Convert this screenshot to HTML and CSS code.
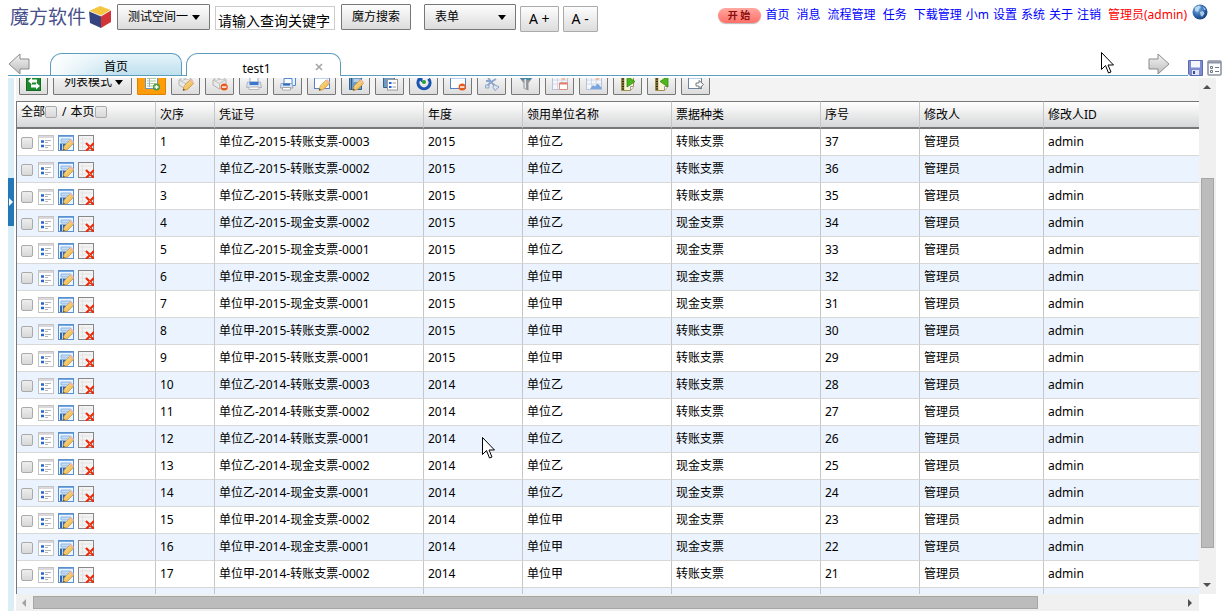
FILE: index.html
```html
<!DOCTYPE html>
<html lang="zh-CN">
<head>
<meta charset="UTF-8">
<meta name="viewport" content="width=device-width, initial-scale=1.0">
<title>魔方软件</title>
<link rel="stylesheet" href="styles.css">
</head>
<body>

<svg class="sprite" aria-hidden="true">
    <defs>
        <linearGradient id="arrowFill" x1="0" y1="0" x2="0" y2="1">
            <stop offset="0" stop-color="#f4f4f4"/><stop offset="1" stop-color="#bdbdbd"/>
        </linearGradient>
        <radialGradient id="globeFill" cx="0.35" cy="0.3" r="0.8">
            <stop offset="0" stop-color="#7fb4e4"/><stop offset="0.6" stop-color="#2a62a6"/><stop offset="1" stop-color="#123a70"/>
        </radialGradient>
        <linearGradient id="pencilFill" x1="0" y1="0" x2="1" y2="1">
            <stop offset="0" stop-color="#ffeeb0"/><stop offset="1" stop-color="#e8a428"/>
        </linearGradient>
    </defs>
    <symbol id="pencil" viewBox="0 0 16 16">
        <path d="M5 15.500l1.200-4.500L12 5l3.500 3.500-6 6z" fill="url(#pencilFill)" stroke="#c98f30" stroke-width=".7"/>
        <path d="M11.500 5.500L13 4l3 3-1.300 1.500z" fill="#f3b79c"/>
        <path d="M5 15.500l.5-2 1.500 1.500z" fill="#444"/>
    </symbol>
    <symbol id="minus" viewBox="0 0 16 16">
        <circle cx="12.200" cy="12" r="3.600" fill="#e85a1a"/>
        <path d="M10 12h4.400" stroke="#fff" stroke-width="1.500"/>
    </symbol>
    <symbol id="i-swap" viewBox="0 0 16 16">
        <rect x=".5" y=".5" width="14" height="15" fill="#1b8a2c" stroke="#136a20"/>
        <path d="M2 6l4-3.500v2h5v3H6v2z" fill="#fff"/>
        <path d="M14 11l-4-3.500v2H5v3h5v2z" fill="#fff"/>
    </symbol>
    <symbol id="i-add" viewBox="0 0 16 16">
        <rect x="1.500" y="0" width="12" height="13.500" fill="#fff" stroke="#6c93c4"/>
        <path d="M3 3.500h9M3 6h9M3 8.500h9M3 11h7" stroke="#a9cc90"/>
        <path d="M5.500 2v10" stroke="#8fb4dc"/>
        <circle cx="12.500" cy="12" r="3.500" fill="#4c9a3a"/>
        <path d="M10.500 12h4M12.500 10v4" stroke="#fff" stroke-width="1.400"/>
    </symbol>
    <symbol id="i-blocks" viewBox="0 0 16 16">
        <path d="M1 5l3-2 3 1.500L10 2.500l4 2v5L7.500 14 1 10z" fill="#e9e9e9" stroke="#a5a5a5" stroke-width=".8"/>
        <path d="M1 5l6.500 3.500L14 4.500M7.500 8.500V14" fill="none" stroke="#b5b5b5" stroke-width=".8"/>
        <ellipse cx="4.500" cy="4" rx="2" ry="1.200" fill="#fff" stroke="#aaa" stroke-width=".6"/>
        <ellipse cx="10" cy="3.500" rx="2" ry="1.200" fill="#fff" stroke="#aaa" stroke-width=".6"/>
    </symbol>
    <symbol id="i-print" viewBox="0 0 16 16">
        <path d="M4 1h8v6H4z" fill="#fff" stroke="#9ab"/>
        <path d="M1.500 7h13l1 5.500H.5z" fill="#dde3ee" stroke="#a2a9b8" stroke-width=".8"/>
        <path d="M3.500 8.500h9" stroke="#3978d0" stroke-width="3"/>
        <path d="M3 12h10v2.500H3z" fill="#fafafa" stroke="#aaa" stroke-width=".8"/>
    </symbol>
    <symbol id="i-prints" viewBox="0 0 16 16">
        <path d="M7 .5h8.500v10H13" fill="#e8f1ff" stroke="#4e8ad8"/>
        <path d="M4 3.500h8v6H4z" fill="#fff" stroke="#4e8ad8"/>
        <path d="M1 8.500h11l1 4.500H.5z" fill="#dbe4f2" stroke="#8796b0" stroke-width=".8"/>
        <path d="M3 9.500h7" stroke="#2f6fc4" stroke-width="2.200"/>
        <path d="M2.500 12.500h8V15h-8z" fill="#fff" stroke="#999" stroke-width=".8"/>
    </symbol>
    <symbol id="i-window" viewBox="0 0 16 16">
        <rect x=".5" y="1.500" width="15" height="12" fill="#fff" stroke="#5583c4"/>
        <path d="M1 2.500h14" stroke="#78a5de" stroke-width="2"/>
    </symbol>
    <symbol id="i-book" viewBox="0 0 16 16">
        <path d="M1.500 1.500h12v13h-12z" fill="#6d9cc8" stroke="#35628f"/>
        <path d="M3.500 1.500v13" stroke="#2d577f"/>
        <path d="M5.500 4h6v3h-6z" fill="#b4d0ea"/>
    </symbol>
    <symbol id="i-form" viewBox="0 0 16 16">
        <path d="M1.500 1.500h11v11h-11z" fill="#6d9cc8" stroke="#35628f"/>
        <rect x="5.500" y="4.500" width="10" height="10.500" fill="#fff" stroke="#999"/>
        <path d="M7 8h2.500M7 12h2.500" stroke="#1f63d0" stroke-width="2"/>
        <path d="M10.500 8H14M10.500 12H14" stroke="#999"/>
    </symbol>
    <symbol id="i-refresh" viewBox="0 0 16 16">
        <path d="M3.500 3.800A6 6 0 1 0 12.500 3.800" fill="none" stroke="#1d55b4" stroke-width="3.200"/>
        <path d="M0 1.500h6.500V8z" fill="#1d55b4"/>
        <circle cx="8" cy="7" r="2" fill="#23a03a"/>
    </symbol>
    <symbol id="i-flow" viewBox="0 0 16 16">
        <path d="M3 1l4 6 5-3M7 7l-4 4M7 7l5 5M2 6h5" fill="none" stroke="#8aa6cf" stroke-width="1.800"/>
        <path d="M10 9.500l5 2.500-4 3.500-2-3z" fill="#d9e7f7" stroke="#8aa0c4"/>
        <path d="M1.500 10h3.500v3H1.500z" fill="#cfdff2" stroke="#8aa0c4" stroke-width=".8"/>
    </symbol>
    <symbol id="i-funnel" viewBox="0 0 16 16">
        <path d="M0 1h16L10.500 8v7.500l-5-2V8z" fill="#909499"/>
        <path d="M1 1.500h14L12 5H4z" fill="#4a88a8"/>
        <path d="M7.300 4v9.500" stroke="#e4e8ea" stroke-width="1.600"/>
    </symbol>
    <symbol id="i-chart" viewBox="0 0 16 16">
        <rect x=".5" y=".5" width="15" height="14" fill="#f6f7fb" stroke="#b8c2d8"/>
        <path d="M1 5h14M1 9h14M5.500 1v13M10 1v13" stroke="#d0d8e6"/>
        <circle cx="11.500" cy="3.500" r="1.800" fill="#f6b898"/>
    </symbol>
    <symbol id="i-notebook" viewBox="0 0 16 16">
        <path d="M1.500 .5h12v11l-3 4h-9z" fill="#f8f4d8" stroke="#a3904c"/>
        <path d="M3 1v14" stroke="#8a7436" stroke-width="2.500"/>
        <path d="M3 1v14" stroke="#2c2818" stroke-width="2" stroke-dasharray="1 1.500"/>
        <path d="M10.500 15v-3.500h3" fill="#fff" stroke="#999"/>
    </symbol>
    <symbol id="i-export" viewBox="0 0 16 16">
        <rect x=".5" y="1.500" width="13" height="12" fill="#fff" stroke="#6d83a0"/>
        <path d="M1 2.500h12" stroke="#7ca4d6" stroke-width="2"/>
        <path d="M8 8h3V5.500l4.500 4-4.500 4V11H8z" fill="#fff" stroke="#777"/>
    </symbol>
    <symbol id="i-list" viewBox="0 0 16 16">
        <rect x=".5" y=".5" width="15" height="15" fill="#fff" stroke="#c4c4c4"/>
        <path d="M1 2h14" stroke="#dad8dc" stroke-width="2"/>
        <path d="M3 6.500h3M3 11h3" stroke="#2467cf" stroke-width="2.500"/>
        <path d="M7 5.500h6M7 7.500h3M7 10.500h6M7 12.500h3" stroke="#b4b4b4"/>
    </symbol>
    <symbol id="i-edit" viewBox="0 0 16 16">
        <rect x=".5" y=".5" width="15" height="15" fill="#edf5fd" stroke="#5a8fd0"/>
        <path d="M1 1.500h14" stroke="#78a8e2"/>
        <path d="M3 4h10v3H3z" fill="#c5dcf5" stroke="#8db8e8"/>
        <path d="M2 8.500h6V15H2z" fill="#2e67b0"/>
        <path d="M4.500 9v6" stroke="#b9d2f0"/>
        <use href="#pencil"/>
    </symbol>
    <symbol id="i-delete" viewBox="0 0 16 16">
        <rect x=".5" y=".5" width="15" height="15" fill="#f3f3f3" stroke="#888"/>
        <path d="M2 4h12M2 8h6M2 12h6M4.500 2v12" stroke="#e2e2e2"/>
        <path d="M8 8l8 8M16 8l-8 8" stroke="#ee2a0c" stroke-width="2.200"/>
        <path d="M11 11l2 2" stroke="#ff8a4c"/>
    </symbol>
</svg>

<header class="topbar">
    <div class="logo">
        <span>魔方软件</span>
        <svg width="24" height="22" viewBox="0 0 24 22">
            <path d="M1 5L12 0l11 4-10 6z" fill="#f5c640"/>
            <path d="M1 5l12 5v12L2 17z" fill="#35437f"/>
            <path d="M23 4v12l-10 6V10z" fill="#d23438"/>
            <path d="M1 5l12 5M13 10l10-6" fill="none" stroke="#fff" stroke-width=".8"/>
        </svg>
    </div>
    <select class="btn space-select" aria-label="空间"><option>测试空间一</option></select>
    <input class="search" type="text" value="请输入查询关键字" aria-label="查询关键字">
    <button class="btn search-btn" type="button">魔方搜索</button>
    <select class="btn type-select" aria-label="类型"><option>表单</option></select>
    <button class="btn zoom-btn" type="button">A +</button>
    <button class="btn zoom-btn" type="button">A -</button>
    <nav class="links">
        <button class="start" type="button">开 始</button>
        <div class="main-links">
            <a href="#">首页</a>
            <a href="#">消息</a>
            <a href="#">流程管理</a>
            <a href="#">任务</a>
            <a href="#">下载管理</a>
        </div>
        <div class="sub-links">
            <a href="#">小m</a>
            <a href="#">设置</a>
            <a href="#">系统</a>
            <a href="#">关于</a>
            <a href="#">注销</a>
        </div>
        <a class="user" href="#">管理员(admin)</a>
        <svg class="globe" width="16" height="16" viewBox="0 0 16 16">
            <circle cx="8" cy="8" r="7.500" fill="url(#globeFill)"/>
            <path d="M3 3.500l4-2 2 1.500-2 2-1 3-3-1zM8 8l3-1 1.500 2.500L10 13 8.500 11zM11 2.500l3 3-2 .5z" fill="#c9e2f5" opacity=".8"/>
        </svg>
    </nav>
</header>

<div class="tabbar">
    <div class="tabs">
        <button class="icon-btn prev" type="button" aria-label="上一个">
            <svg width="22" height="22" viewBox="0 0 22 22"><path d="M1 11L12 1v5h9v10h-9v5z" fill="url(#arrowFill)" stroke="#8b8b8b"/></svg>
        </button>
        <a class="tab" href="#">首页</a>
        <a class="tab active" href="#">test1</a>
        <button class="icon-btn close" type="button" aria-label="关闭">
            <svg width="8" height="8" viewBox="0 0 8 8"><path d="M1 1l6 6M7 1L1 7" stroke="#a5a5a5" stroke-width="1.600"/></svg>
        </button>
        <button class="icon-btn next" type="button" aria-label="下一个">
            <svg width="22" height="22" viewBox="0 0 22 22"><path d="M21 11L10 1v5H1v10h9v5z" fill="url(#arrowFill)" stroke="#8b8b8b"/></svg>
        </button>
    </div>
    <button class="icon-btn" type="button" aria-label="保存">
        <svg width="15" height="16" viewBox="0 0 15 16">
            <path d="M.5 .5h14v15H2l-1.500-1.500z" fill="#7d8dd0" stroke="#5c69b4"/>
            <path d="M3 1h9v6.500H3z" fill="#f5f7ff"/><path d="M4 10h7v5H4z" fill="#dfe3f2"/><path d="M5 11h2v3H5z" fill="#3d4c9a"/>
        </svg>
    </button>
    <button class="icon-btn" type="button" aria-label="列表">
        <svg width="15" height="16" viewBox="0 0 15 16">
            <rect x="1" y="1" width="13" height="14" rx="1" fill="#fff" stroke="#8b95a3" stroke-width="1.600"/>
            <path d="M1 2.500h13" stroke="#8b95a3" stroke-width="2"/>
            <path d="M3.500 6.500h2v2h-2zM3.500 10.500h2v2h-2z" fill="none" stroke="#6c7684"/><path d="M8 7.500h4M8 11.500h4" stroke="#6c7684"/>
        </svg>
    </button>
</div>

<main class="workspace">
    <aside class="splitter">
        <button class="expand" type="button" aria-label="展开">
            <svg width="4" height="8" viewBox="0 0 4 8"><path d="M0 0l4 4-4 4z" fill="#fff"/></svg>
        </button>
    </aside>
    <div class="panel">
        <div class="toolbar">
            <button class="tool" type="button" aria-label="切换"><svg><use href="#i-swap"/></svg></button>
            <select class="tool mode" aria-label="显示模式"><option>列表模式</option></select>
            <button class="tool on" type="button" aria-label="新增"><svg><use href="#i-add"/></svg></button>
            <button class="tool" type="button" aria-label="批量修改"><svg><use href="#i-blocks"/><use href="#pencil"/></svg></button>
            <button class="tool" type="button" aria-label="批量删除"><svg><use href="#i-blocks"/><use href="#minus"/></svg></button>
            <button class="tool" type="button" aria-label="打印"><svg><use href="#i-print"/></svg></button>
            <button class="tool" type="button" aria-label="批量打印"><svg><use href="#i-prints"/></svg></button>
            <button class="tool" type="button" aria-label="修改"><svg><use href="#i-window"/><use href="#pencil"/></svg></button>
            <button class="tool" type="button" aria-label="编辑"><svg><use href="#i-book"/><use href="#pencil"/></svg></button>
            <button class="tool" type="button" aria-label="表单"><svg><use href="#i-form"/></svg></button>
            <button class="tool" type="button" aria-label="刷新"><svg><use href="#i-refresh"/></svg></button>
            <button class="tool" type="button" aria-label="删除"><svg><use href="#i-window"/><use href="#minus"/></svg></button>
            <button class="tool" type="button" aria-label="流程"><svg><use href="#i-flow"/></svg></button>
            <button class="tool" type="button" aria-label="过滤"><svg><use href="#i-funnel"/></svg></button>
            <button class="tool" type="button" aria-label="报表"><svg><use href="#i-chart"/><path d="M7.500 8h8v6.500h-8z" fill="#fff" stroke="#dd9080"/><path d="M7.500 8.500h8" stroke="#e0806c" stroke-width="2"/></svg></button>
            <button class="tool" type="button" aria-label="图表"><svg><use href="#i-chart"/><path d="M4 14l3-4 2 1.500 2.500-3 4 4V14z" fill="#7ba5de"/></svg></button>
            <button class="tool" type="button" aria-label="导入"><svg><use href="#i-notebook"/><path d="M7 1l8 5.500L7 12z" fill="#4cb81e" stroke="#2c7d10" stroke-width=".7"/></svg></button>
            <button class="tool" type="button" aria-label="导出"><svg><use href="#i-notebook"/><path d="M14 1L6 6.500l8 5.500z" fill="#4cb81e" stroke="#2c7d10" stroke-width=".7"/></svg></button>
            <button class="tool" type="button" aria-label="转出"><svg><use href="#i-export"/></svg></button>
        </div>
        <div class="grid-wrap">
            <table class="grid">
                <colgroup>
                    <col class="c-ops"><col class="c-no"><col class="c-code"><col class="c-year"><col class="c-unit"><col class="c-kind"><col class="c-seq"><col class="c-user"><col>
                </colgroup>
                <thead>
                    <tr>
                        <th class="pick"><label>全部<input type="checkbox"></label><span class="slash">/</span><label>本页<input type="checkbox"></label></th>
                        <th>次序</th>
                        <th>凭证号</th>
                        <th>年度</th>
                        <th>领用单位名称</th>
                        <th>票据种类</th>
                        <th>序号</th>
                        <th>修改人</th>
                        <th>修改人ID</th>
                    </tr>
                </thead>
                <tbody id="rows"></tbody>
            </table>
        </div>
        <div class="hscroll">
            <span class="arrow left"></span>
            <span class="thumb"></span>
            <span class="rest"></span>
            <span class="arrow right"></span>
        </div>
    </div>
    <div class="vscroll">
        <span class="arrow up"></span>
        <span class="before"></span>
        <span class="thumb"></span>
        <span class="rest"></span>
        <span class="arrow down"></span>
    </div>
</main>

<svg class="cursor cursor-top" width="13" height="22" viewBox="0 0 13 22"><path d="M.5 .5v17l4-4 3 7.500 2.500-1-3-7h5.500z" fill="#fff" stroke="#000"/></svg>
<svg class="cursor cursor-grid" width="13" height="22" viewBox="0 0 13 22"><path d="M.5 .5v17l4-4 3 7.500 2.500-1-3-7h5.500z" fill="#fff" stroke="#000"/></svg>

<script>
    // unit, year, kind, number
    const records = [
        ['单位乙', 2015, '转账支票', '0003'],
        ['单位乙', 2015, '转账支票', '0002'],
        ['单位乙', 2015, '转账支票', '0001'],
        ['单位乙', 2015, '现金支票', '0002'],
        ['单位乙', 2015, '现金支票', '0001'],
        ['单位甲', 2015, '现金支票', '0002'],
        ['单位甲', 2015, '现金支票', '0001'],
        ['单位甲', 2015, '转账支票', '0002'],
        ['单位甲', 2015, '转账支票', '0001'],
        ['单位乙', 2014, '转账支票', '0003'],
        ['单位乙', 2014, '转账支票', '0002'],
        ['单位乙', 2014, '转账支票', '0001'],
        ['单位乙', 2014, '现金支票', '0002'],
        ['单位乙', 2014, '现金支票', '0001'],
        ['单位甲', 2014, '现金支票', '0002'],
        ['单位甲', 2014, '现金支票', '0001'],
        ['单位甲', 2014, '转账支票', '0002']
    ];
    const rows = document.getElementById('rows');

    function rowHtml(r, i) {
        const cells = [i + 1, `${r[0]}-${r[1]}-${r[2]}-${r[3]}`, r[1], r[0], r[2], 37 - i, '管理员', 'admin'];
        return `<tr>
            <td><div class="ops">
                <input type="checkbox" aria-label="选择第${i + 1}行">
                <button class="icon-btn" type="button" aria-label="查看"><svg width="16" height="16"><use href="#i-list"/></svg></button>
                <button class="icon-btn" type="button" aria-label="修改"><svg width="16" height="16"><use href="#i-edit"/></svg></button>
                <button class="icon-btn" type="button" aria-label="删除"><svg width="16" height="16"><use href="#i-delete"/></svg></button>
            </div></td>
            ${cells.map(c => `<td>${c}</td>`).join('')}
        </tr>`;
    }

    // the last, empty row runs under the scrollbar
    rows.innerHTML = records.map(rowHtml).join('') + '<tr>' + '<td></td>'.repeat(9) + '</tr>';
</script>

</body>
</html>
```
FILE: styles.css
```css
* {
    box-sizing: border-box;
}
body {
    display: flex;
    flex-direction: column;
    height: 100vh;
    margin: 0;
    padding-bottom: 5px;
    overflow: hidden;
    background: #fff;
    color: #000;
    font: 12px/16px "Noto Sans", "Noto Sans CJK SC", sans-serif;
}
button, input, select {
    margin: 0;
    font: inherit;
    color: inherit;
}
svg {
    display: block;
}
.sprite {
    position: absolute;
    width: 0;
    height: 0;
}
.icon-btn {
    padding: 0;
    border: 0;
    background: none;
}

/* top bar */
.topbar {
    display: flex;
    align-items: flex-start;
    flex: none;
    height: 52px;
    padding: 4px 16px 0 10px;
}
.logo {
    display: flex;
    align-items: center;
    gap: 3px;
    margin-right: 5px;
    height: 26px;
    color: #47508a;
    font-size: 19px;
    white-space: nowrap;
}
.logo span {
    width: 75px;
}
.btn {
    height: 26px;
    padding: 0 10px;
    border: 1px solid #777;
    border-radius: 1px;
    background: linear-gradient(#fdfdfd, #dcdcdc);
}
select {
    appearance: none;
}
select.btn {
    background: url("data:image/svg+xml,%3Csvg xmlns='http://www.w3.org/2000/svg' width='8' height='5'%3E%3Cpath d='M0 0h8L4 5z'/%3E%3C/svg%3E") no-repeat right 9px center, linear-gradient(#fdfdfd, #dcdcdc);
}
.space-select {
    width: 93px;
}
.search {
    width: 120px;
    height: 24px;
    margin: 2px 6px 0 5px;
    padding: 3px 2px 0;
    border: 1px solid #ccc;
    font-size: 14px;
}
.search-btn {
    width: 70px;
    margin-right: 13px;
    padding: 0;
}
.type-select {
    width: 92px;
}
.zoom-btn {
    margin: 2px 0 0 4px;
    padding: 0 8px;
    border-color: #aaa;
    font-size: 14px;
    white-space: nowrap;
}
.links {
    display: flex;
    align-items: center;
    height: 22px;
    margin-left: auto;
    white-space: nowrap;
}
.links a {
    color: #00f;
    text-decoration: none;
}
.main-links {
    display: flex;
    gap: 7px;
    margin: 0 4px 0 5px;
}
.sub-links {
    display: flex;
    gap: 4px;
    margin-right: 7px;
}
.links .user {
    color: #f00;
}
.globe {
    margin: 0 0 6px 5px;
}
.start {
    width: 43px;
    height: 15px;
    padding: 0;
    border: 0;
    border-radius: 8px;
    background: linear-gradient(#ffa8a0, #ff7068);
    box-shadow: 0 1px 1px #bbb;
    color: #8a1010;
    font-size: 10px;
    font-weight: bold;
    line-height: 15px;
}

/* tabs */
.tabbar {
    display: flex;
    flex: none;
    align-items: flex-end;
    gap: 4px;
    height: 24px;
    margin-bottom: 2px;
    padding: 0 2px 0 8px;
}
.tabs {
    display: flex;
    flex: 1;
    height: 24px;
    margin-right: -4px;
    border-bottom: 1px solid #5c9dbd;
}
.tab {
    height: 22px;
    margin-top: 1px;
    padding-top: 5px;
    border: 1px solid #5c9dbd;
    border-bottom: 0;
    border-radius: 12px 10px 0 0;
    background: linear-gradient(100deg, #fff, transparent 50%), linear-gradient(#e6f4fa, #bfe0ee);
    color: #000;
    text-align: center;
    text-decoration: none;
}
.prev {
    margin-right: 20px;
}
.prev + .tab {
    width: 132px;
}
.tab.active {
    width: 155px;
    height: 23px;
    margin-left: 4px;
    padding-top: 7px;
    padding-right: 14px;
    background: #fff;
}
.close {
    align-self: flex-start;
    margin: 11px 0 0 -26px;
}
.next {
    margin: 0 18px 0 auto;
}

/* work area */
.workspace {
    display: flex;
    flex: 1;
    min-height: 0;
    padding: 0 8px;
}
.splitter {
    flex: none;
    width: 6px;
    margin-right: 2px;
    padding-top: 100px;
    background: #dceef5;
}
.expand {
    display: flex;
    align-items: center;
    width: 6px;
    height: 48px;
    padding: 0 0 0 1px;
    border: 0;
    background: #2478b8;
}
.panel {
    display: flex;
    flex: 1;
    flex-direction: column;
    min-width: 0;
}
.toolbar {
    display: flex;
    flex: none;
    align-items: flex-end;
    gap: 5px;
    height: 23px;
    padding: 0 3px 6px;
    overflow: hidden;
    background: #f3f3f3;
}
.tool {
    flex: none;
    width: 29px;
    height: 26px;
    padding: 5px 6px;
    border: 1px solid #777;
    border-radius: 1px;
    background: linear-gradient(#fff, #dcdcdc);
}
.tool svg {
    width: 16px;
    height: 16px;
}
.tool.on {
    border-color: #e08000;
    background: #ff9c0a;
}
.tool.mode {
    width: 79px;
    padding: 0 0 0 10px;
    background: url("data:image/svg+xml,%3Csvg xmlns='http://www.w3.org/2000/svg' width='8' height='5'%3E%3Cpath d='M0 0h8L4 5z'/%3E%3C/svg%3E") no-repeat right 8px center, linear-gradient(#fff, #dcdcdc);
}
.grid-wrap {
    flex: 1;
    min-height: 0;
    overflow: hidden;
    border-left: 1px solid #777;
}
.grid {
    width: 100%;
    border-collapse: separate;
    border-spacing: 0;
    table-layout: fixed;
}
.c-ops {
    width: 139px;
}
.c-no {
    width: 59px;
}
.c-code {
    width: 209px;
}
.c-year, .c-seq {
    width: 99px;
}
.c-unit, .c-kind {
    width: 149px;
}
.c-user {
    width: 124px;
}
.grid th, .grid td {
    height: 27px;
    padding: 0 4px;
    border-right: 1px solid #c6c6c6;
    border-bottom: 1px solid #d8d8d8;
    text-align: left;
    white-space: nowrap;
}
.grid th:last-child, .grid td:last-child {
    border-right: 0;
}
.grid th {
    height: 28px;
    border-top: 1px solid #777;
    border-bottom: 2px solid #777;
    background: linear-gradient(#fff, #d6d7d8);
    font-weight: normal;
}
.grid .pick {
    padding-bottom: 5px;
}
.slash {
    margin: 0 4px 0 5px;
}
.grid input {
    appearance: none;
    width: 12px;
    height: 12px;
    border: 1px solid #aaa;
    border-radius: 2px;
    background: linear-gradient(#eee, #d8d8d8);
}
.pick input {
    vertical-align: -2px;
}
.grid tr:nth-child(even) td {
    background: #ebf4fe;
}
.ops {
    display: flex;
    align-items: center;
    gap: 4px;
    padding-top: 2px;
}
.ops input {
    margin-right: 1px;
}

/* scrollbars */
.hscroll, .vscroll {
    display: flex;
    flex: none;
    background: #f0f0f0;
}
.hscroll {
    height: 17px;
}
.vscroll {
    flex-direction: column;
    width: 17px;
    margin-bottom: 17px;
}
.thumb {
    border: 1px solid #a6a6a6;
    background: #bcbcbc;
}
.hscroll .thumb {
    flex: 1005;
    margin: 2px 0;
}
.hscroll .rest {
    flex: 144;
}
.vscroll .before {
    flex: 83;
}
.vscroll .thumb {
    flex: 370;
    margin: 0 2px;
}
.vscroll .rest {
    flex: 29;
}
.arrow {
    flex: none;
    width: 17px;
    height: 17px;
    background: #505050;
}
.arrow.left {
    background: #a3a3a3;
    clip-path: polygon(6px 9px, 10px 5px, 10px 13px);
}
.arrow.right {
    clip-path: polygon(6px 5px, 10px 9px, 6px 13px);
}
.arrow.up {
    clip-path: polygon(4px 11px, 8px 7px, 12px 11px);
}
.arrow.down {
    clip-path: polygon(4px 6px, 12px 6px, 8px 10px);
}

/* mouse pointers */
.cursor {
    position: absolute;
    pointer-events: none;
}
.cursor-top {
    top: 52px;
    left: 1101px;
}
.cursor-grid {
    top: 437px;
    left: 482px;
}
```
